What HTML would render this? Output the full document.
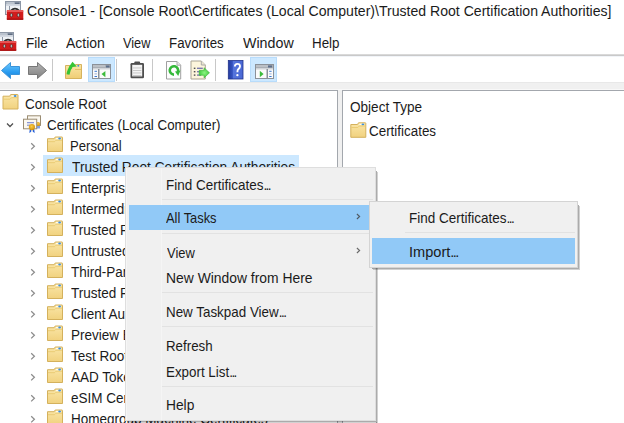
<!DOCTYPE html>
<html><head><meta charset="utf-8">
<style>
*{margin:0;padding:0;box-sizing:border-box}
html,body{width:624px;height:423px;overflow:hidden;background:#fff}
body{position:relative;font-family:"Liberation Sans",sans-serif;color:#1b1b1b}
.a{position:absolute}
.t{position:absolute;white-space:pre;line-height:1;transform-origin:0 0}
svg{position:absolute;overflow:visible}
.e{letter-spacing:-1.6px}
</style></head><body>
<svg style="left:0;top:0" width="30" height="24" viewBox="0 0 30 24">
  <rect x="5.5" y="1.5" width="15" height="13" fill="#eef1f5" stroke="#8d97a6"/>
  <rect x="6" y="2" width="14" height="2.5" fill="#a3adbb"/>
  <rect x="6.5" y="2.6" width="7.5" height="0.8" fill="#dfe4ea"/>
  <rect x="15" y="2.5" width="4.5" height="1.5" fill="#5d6b80"/>
  <rect x="6" y="4.5" width="14" height="1.5" fill="#d3d9e2"/>
  <rect x="9" y="6" width="1" height="8" fill="#8d97a6"/>
  <path d="M10.8 10.6 Q15 6.6 19.2 10.6" fill="none" stroke="#2e2e2e" stroke-width="1.5"/>
  <rect x="6.8" y="10" width="16.5" height="9.8" rx="1" fill="#d21c1c"/>
  <rect x="6.8" y="10" width="16.5" height="2" rx="0.8" fill="#e65454"/>
  <rect x="6.8" y="18.5" width="16.5" height="1.3" fill="#a50e0e"/>
  <ellipse cx="11.4" cy="15.1" rx="1.3" ry="1.8" fill="#a8c2c0" stroke="#6a1414" stroke-width="0.7"/>
  <ellipse cx="18.4" cy="15.1" rx="1.3" ry="1.8" fill="#a8c2c0" stroke="#6a1414" stroke-width="0.7"/>
</svg>
<div class="t" style="left:27.34px;top:4.0px;font-size:14.7px;transform:scaleX(0.9581);color:#1b1b1b;">Console1 - [Console Root\Certificates (Local Computer)\Trusted Root Certification Authorities]</div>
<svg style="left:-7px;top:31px" width="30" height="24" viewBox="0 0 30 24">
  <rect x="5.5" y="1.5" width="15" height="13" fill="#eef1f5" stroke="#8d97a6"/>
  <rect x="6" y="2" width="14" height="2.5" fill="#a3adbb"/>
  <rect x="6.5" y="2.6" width="7.5" height="0.8" fill="#dfe4ea"/>
  <rect x="15" y="2.5" width="4.5" height="1.5" fill="#5d6b80"/>
  <rect x="6" y="4.5" width="14" height="1.5" fill="#d3d9e2"/>
  <rect x="9" y="6" width="1" height="8" fill="#8d97a6"/>
  <path d="M10.8 10.6 Q15 6.6 19.2 10.6" fill="none" stroke="#2e2e2e" stroke-width="1.5"/>
  <rect x="6.8" y="10" width="16.5" height="9.8" rx="1" fill="#d21c1c"/>
  <rect x="6.8" y="10" width="16.5" height="2" rx="0.8" fill="#e65454"/>
  <rect x="6.8" y="18.5" width="16.5" height="1.3" fill="#a50e0e"/>
  <ellipse cx="11.4" cy="15.1" rx="1.3" ry="1.8" fill="#a8c2c0" stroke="#6a1414" stroke-width="0.7"/>
  <ellipse cx="18.4" cy="15.1" rx="1.3" ry="1.8" fill="#a8c2c0" stroke="#6a1414" stroke-width="0.7"/>
</svg>
<div class="t" style="left:25.78px;top:36.0px;font-size:14.7px;transform:scaleX(0.9227);color:#1b1b1b;">File</div>
<div class="t" style="left:65.6px;top:36.0px;font-size:14.7px;transform:scaleX(0.9525);color:#1b1b1b;">Action</div>
<div class="t" style="left:123.2px;top:36.0px;font-size:14.7px;transform:scaleX(0.8687);color:#1b1b1b;">View</div>
<div class="t" style="left:169.49px;top:36.0px;font-size:14.7px;transform:scaleX(0.9068);color:#1b1b1b;">Favorites</div>
<div class="t" style="left:243.3px;top:36.0px;font-size:14.7px;transform:scaleX(0.9702);color:#1b1b1b;">Window</div>
<div class="t" style="left:312.09px;top:36.0px;font-size:14.7px;transform:scaleX(0.9103);color:#1b1b1b;">Help</div>
<div class="a" style="left:0;top:54px;width:624px;height:1px;background:#d9d9d9"></div><div class="a" style="left:0;top:55px;width:624px;height:1px;background:#c9c9c9"></div><div class="a" style="left:0;top:56px;width:624px;height:1px;background:#f1f4f8"></div>

<div class="a" style="left:88px;top:57px;width:27px;height:25px;background:#cce8ff;border:1px solid #b8dcfb"></div>
<div class="a" style="left:250px;top:57px;width:27px;height:25px;background:#cce8ff;border:1px solid #b8dcfb"></div>
<div class="a" style="left:52px;top:59px;width:1px;height:22px;background:#c8c8c8"></div>
<div class="a" style="left:116px;top:59px;width:1px;height:22px;background:#c8c8c8"></div>
<div class="a" style="left:152px;top:59px;width:1px;height:22px;background:#c8c8c8"></div>
<div class="a" style="left:215px;top:59px;width:1px;height:22px;background:#c8c8c8"></div>
<svg style="left:0;top:56px" width="300" height="26" viewBox="0 56 300 26">
  <defs>
    <linearGradient id="gb" x1="0" y1="0" x2="0" y2="1"><stop offset="0" stop-color="#6fcaff"/><stop offset="0.6" stop-color="#2a9cf0"/><stop offset="1" stop-color="#1a7fd6"/></linearGradient>
    <linearGradient id="gg" x1="0" y1="0" x2="0" y2="1"><stop offset="0" stop-color="#b4b4b4"/><stop offset="1" stop-color="#808080"/></linearGradient>
    <linearGradient id="gh" x1="0" y1="0" x2="1" y2="0"><stop offset="0" stop-color="#243c9e"/><stop offset="0.28" stop-color="#3452c0"/><stop offset="0.32" stop-color="#5675dc"/><stop offset="1" stop-color="#4a68d4"/></linearGradient>
    <linearGradient id="gfu" x1="0" y1="0" x2="0" y2="1"><stop offset="0" stop-color="#fbe6a6"/><stop offset="1" stop-color="#efcd74"/></linearGradient>
    <radialGradient id="gar" cx="0.5" cy="0.5" r="0.6"><stop offset="0" stop-color="#8af57f"/><stop offset="1" stop-color="#38c236"/></radialGradient>
  </defs>
  <!-- back / forward -->
  <path d="M1.5 70.5 L10.5 62.5 L10.5 66.5 L19.5 66.5 L19.5 74.5 L10.5 74.5 L10.5 78.5 Z" fill="url(#gb)" stroke="#3a94da" stroke-width="1" stroke-linejoin="round"/>
  <path d="M46.5 70.5 L37.5 62.5 L37.5 66.5 L28.5 66.5 L28.5 74.5 L37.5 74.5 L37.5 78.5 Z" fill="url(#gg)" stroke="#777" stroke-width="1" stroke-linejoin="round"/>
  <!-- folder up -->
  <path d="M65.5 65.5 L74.5 65.5 L75.5 64.5 L81.5 64.5 L81.5 78.5 L65.5 78.5 Z" fill="url(#gfu)" stroke="#d6b35e"/>
  <path d="M75 69.5 L81 69.5" stroke="#e3bf62"/>
  <circle cx="78.3" cy="65.8" r="1" fill="#4d8fd0"/>
  <path d="M68 74.5 Q68.8 69 71.5 66.5" fill="none" stroke="#35c435" stroke-width="3"/>
  <path d="M68.5 67.5 L72.5 61.8 L76.8 66.5 Z" fill="#35c435"/>
  <!-- show/hide tree -->
  <rect x="92.5" y="64.5" width="18" height="14" fill="#fbfbfb" stroke="#8b9199"/>
  <rect x="93" y="65" width="17" height="3.5" fill="#a9aeb5"/>
  <rect x="93" y="65.6" width="12" height="0.8" fill="#d8dbe0"/>
  <rect x="106" y="65.5" width="3.5" height="2" fill="#5c6f8c"/>
  <rect x="93" y="68.5" width="17" height="1" fill="#d0d3d8"/>
  <rect x="98" y="69" width="1.5" height="9.5" fill="#8b9199"/>
  <rect x="94.5" y="70.8" width="2.5" height="1" fill="#3a78d0"/>
  <rect x="94.5" y="73.4" width="2.5" height="1" fill="#9ab2d8"/>
  <rect x="94.5" y="76" width="2.5" height="1" fill="#3a78d0"/>
  <path d="M105.4 70.9 L101.5 74 L105.4 77.2 Z" fill="#3cbc3c"/>
  <!-- clipboard -->
  <rect x="130.5" y="63" width="13.5" height="15.2" rx="1.2" fill="#4e4e4e"/>
  <rect x="132.2" y="64.8" width="10" height="11.6" fill="#f4f4f4"/>
  <rect x="134.3" y="61.6" width="5.8" height="2.6" rx="1" fill="#4e4e4e"/>
  <rect x="133" y="67.5" width="8.4" height="0.9" fill="#c4c4c4"/>
  <rect x="133" y="70" width="8.4" height="0.9" fill="#c4c4c4"/>
  <rect x="133" y="72.5" width="8.4" height="0.9" fill="#c4c4c4"/>
  <rect x="133" y="75" width="8.4" height="0.9" fill="#c4c4c4"/>
  <!-- refresh doc -->
  <path d="M166.5 61.5 L177 61.5 L180.7 65.2 L180.7 79 L166.5 79 Z" fill="#fdfdfd" stroke="#a0a0a0"/>
  <path d="M177 61.5 L177 65.2 L180.7 65.2" fill="#e8e8e8" stroke="#a8a8a8"/>
  <path d="M174 74.6 A4.2 4.2 0 1 1 177.9 71.8" fill="none" stroke="#35b83a" stroke-width="2.6"/>
  <path d="M175 71.6 L180.4 70.6 L178.2 76 Z" fill="#35b83a"/>
  <!-- export list -->
  <path d="M191 61 L201.3 61 L205.3 65 L205.3 79 L191 79 Z" fill="#fdf5dc" stroke="#a9a394"/>
  <path d="M201.3 61 L201.3 65 L205.3 65" fill="#ece6d2" stroke="#aaa"/>
  <rect x="193.8" y="67.6" width="1.6" height="1.4" fill="#505050"/>
  <rect x="193.8" y="71" width="1.6" height="1.4" fill="#505050"/>
  <rect x="193.8" y="74.4" width="1.6" height="1.4" fill="#505050"/>
  <rect x="197" y="67.6" width="5.8" height="1.4" fill="#7c7cae"/>
  <rect x="197" y="71" width="4" height="1.4" fill="#7c7cae"/>
  <rect x="197" y="74.4" width="4" height="1.4" fill="#7c7cae"/>
  <path d="M199.2 70.3 L204 70.3 L204 67.7 L209.5 72.8 L204 77.9 L204 75.3 L199.2 75.3 Z" fill="url(#gar)" stroke="#3fb63c" stroke-width="0.6" stroke-linejoin="round"/>
  <!-- help -->
  <rect x="228.3" y="60.5" width="14.7" height="18.5" fill="url(#gh)" stroke="#22348c" stroke-width="0.8"/>
  <path d="M234.9 66.6 Q234.9 63.9 237.4 63.9 Q240 63.9 240 66.3 Q240 68 238.4 69.1 Q237.4 69.9 237.4 72.3" fill="none" stroke="#fff" stroke-width="1.9"/>
  <circle cx="237.4" cy="75.2" r="1.15" fill="#fff"/>
  <!-- action pane -->
  <rect x="255.5" y="64.5" width="18" height="14" fill="#fbfbfb" stroke="#8b9199"/>
  <rect x="256" y="65" width="17" height="3.5" fill="#a9aeb5"/>
  <rect x="256" y="65.6" width="12" height="0.8" fill="#d8dbe0"/>
  <rect x="268" y="65.5" width="4" height="2" fill="#5c6f8c"/>
  <rect x="256" y="68.5" width="17" height="1" fill="#d0d3d8"/>
  <rect x="266.5" y="69" width="1.5" height="9.5" fill="#8b9199"/>
  <path d="M259.8 70.8 L263.6 74 L259.8 77.2 Z" fill="#3cbc3c"/>
  <rect x="269.2" y="70.8" width="2.4" height="1" fill="#3a78d0"/>
  <rect x="269.2" y="73.4" width="2.4" height="1" fill="#9ab2d8"/>
  <rect x="269.2" y="76" width="2.4" height="1" fill="#3a78d0"/>
</svg>

<div class="a" style="left:0;top:82px;width:624px;height:341px;background:#f0f0f0"></div><div class="a" style="left:0;top:82px;width:624px;height:1px;background:#e8e8e8"></div><div class="a" style="left:0;top:89px;width:624px;height:1px;background:#f8f8f8"></div>
<div class="a" style="left:-1px;top:90px;width:339px;height:340px;background:#fff;border:1px solid #a3a7ad"></div>
<div class="a" style="left:342px;top:90px;width:290px;height:340px;background:#fff;border:1px solid #a3a7ad"></div>
<div class="a" style="left:43px;top:155px;width:256px;height:21px;background:#cce8ff"></div>
<svg style="left:0;top:0" width="624" height="423" viewBox="0 0 624 423"><defs>
    <linearGradient id="gfo" x1="0" y1="0" x2="0" y2="1"><stop offset="0" stop-color="#fae6a8"/><stop offset="1" stop-color="#f1d27f"/></linearGradient>
    <g id="fold">
      <path d="M0.5 2.2 L7.2 2.2 L8.2 0.5 L15 0.5 Q15.5 0.5 15.5 1 L15.5 15 L0.5 15 Z" fill="url(#gfo)" stroke="#d4b15c"/>
      <path d="M1 5.2 L7.5 5.2 L9 3.7 L15 3.7" fill="none" stroke="#e8c86f" stroke-width="0.9"/>
      <rect x="9" y="1.4" width="5" height="1.3" fill="#fdfbf2"/>
      <ellipse cx="12.6" cy="2" rx="1.4" ry="0.9" fill="#3d8fdc"/>
    </g>
</defs>
<use href="#fold" x="2.5" y="94"/>

  <radialGradient id="gseal" cx="0.45" cy="0.4" r="0.6"><stop offset="0" stop-color="#f8cf4a"/><stop offset="1" stop-color="#d28c06"/></radialGradient>
  <rect x="27.5" y="115.8" width="13" height="9.6" fill="#fbf7ee" stroke="#9a8c72"/>
  <circle cx="38" cy="124" r="2" fill="url(#gseal)"/>
  <path d="M37 126 L37 128.5 M39 126 L39 128.5" stroke="#2c62d6" stroke-width="1.2"/>
  <rect x="23.5" y="119.2" width="13.2" height="9.6" fill="#fbf8f0" stroke="#9a8c72"/>
  <rect x="27" y="122" width="7" height="1.3" fill="#8a96d4"/>
  <rect x="27" y="124.6" width="3" height="1.2" fill="#8a96d4"/>
  <path d="M29.8 129 L29.3 133 L31.2 131.8 L31.4 129 Z M32.6 129 L32.8 131.8 L34.7 133 L34.2 129 Z" fill="#2a62d8"/>
  <circle cx="31.9" cy="127.1" r="3.1" fill="url(#gseal)"/>
  <path d="M7 123.5 L10 126.5 L13 123.5" fill="none" stroke="#505050" stroke-width="1.3"/>

<g fill="none" stroke="#8c8c8c" stroke-width="1.25">
<path d="M31.2 143.2 L34.4 146.3 L31.2 149.4"/>
<path d="M31.2 164.2 L34.4 167.3 L31.2 170.4"/>
<path d="M31.2 185.2 L34.4 188.3 L31.2 191.4"/>
<path d="M31.2 206.2 L34.4 209.3 L31.2 212.4"/>
<path d="M31.2 227.2 L34.4 230.3 L31.2 233.4"/>
<path d="M31.2 248.2 L34.4 251.3 L31.2 254.4"/>
<path d="M31.2 269.2 L34.4 272.3 L31.2 275.4"/>
<path d="M31.2 290.2 L34.4 293.3 L31.2 296.4"/>
<path d="M31.2 311.2 L34.4 314.3 L31.2 317.4"/>
<path d="M31.2 332.2 L34.4 335.3 L31.2 338.4"/>
<path d="M31.2 353.2 L34.4 356.3 L31.2 359.4"/>
<path d="M31.2 374.2 L34.4 377.3 L31.2 380.4"/>
<path d="M31.2 395.2 L34.4 398.3 L31.2 401.4"/>
<path d="M31.2 416.2 L34.4 419.3 L31.2 422.4"/>
</g>
<use href="#fold" x="47" y="136.5"/>
<use href="#fold" x="47" y="157.5"/>
<use href="#fold" x="47" y="178.5"/>
<use href="#fold" x="47" y="199.5"/>
<use href="#fold" x="47" y="220.5"/>
<use href="#fold" x="47" y="241.5"/>
<use href="#fold" x="47" y="262.5"/>
<use href="#fold" x="47" y="283.5"/>
<use href="#fold" x="47" y="304.5"/>
<use href="#fold" x="47" y="325.5"/>
<use href="#fold" x="47" y="346.5"/>
<use href="#fold" x="47" y="367.5"/>
<use href="#fold" x="47" y="388.5"/>
<use href="#fold" x="47" y="409.5"/>
<use href="#fold" x="350.3" y="122.3"/>
</svg>
<div class="t" style="left:25.08px;top:96.8px;font-size:14.7px;transform:scaleX(0.917);color:#1b1b1b;">Console Root</div>
<div class="t" style="left:47.09px;top:117.8px;font-size:14.7px;transform:scaleX(0.9085);color:#1b1b1b;">Certificates (Local Computer)</div>
<div class="t" style="left:69.91px;top:138.8px;font-size:14.7px;transform:scaleX(0.8929);color:#1b1b1b;">Personal</div>
<div class="t" style="left:71.5px;top:159.8px;font-size:14.7px;transform:scaleX(0.9349);color:#1b1b1b;">Trusted Root Certification Authorities</div>
<div class="t" style="left:70.6px;top:180.8px;font-size:14.7px;transform:scaleX(0.92);color:#1b1b1b">Enterprise Trust</div>
<div class="t" style="left:70.6px;top:201.8px;font-size:14.7px;transform:scaleX(0.92);color:#1b1b1b">Intermediate Certification Authorities</div>
<div class="t" style="left:70.6px;top:222.8px;font-size:14.7px;transform:scaleX(0.92);color:#1b1b1b">Trusted Publishers</div>
<div class="t" style="left:70.6px;top:243.8px;font-size:14.7px;transform:scaleX(0.92);color:#1b1b1b">Untrusted Certificates</div>
<div class="t" style="left:70.6px;top:264.8px;font-size:14.7px;transform:scaleX(0.92);color:#1b1b1b">Third-Party Root Certification Authorities</div>
<div class="t" style="left:70.6px;top:285.8px;font-size:14.7px;transform:scaleX(0.92);color:#1b1b1b">Trusted People</div>
<div class="t" style="left:70.6px;top:306.8px;font-size:14.7px;transform:scaleX(0.92);color:#1b1b1b">Client Authentication Issuers</div>
<div class="t" style="left:70.6px;top:327.8px;font-size:14.7px;transform:scaleX(0.92);color:#1b1b1b">Preview Build Roots</div>
<div class="t" style="left:70.6px;top:348.8px;font-size:14.7px;transform:scaleX(0.92);color:#1b1b1b">Test Roots</div>
<div class="t" style="left:70.6px;top:369.8px;font-size:14.7px;transform:scaleX(0.92);color:#1b1b1b">AAD Token Issuer</div>
<div class="t" style="left:70.6px;top:390.8px;font-size:14.7px;transform:scaleX(0.92);color:#1b1b1b">eSIM Certification Authorities</div>
<div class="t" style="left:70.6px;top:411.8px;font-size:14.7px;transform:scaleX(0.92);color:#1b1b1b">Homegroup Machine Certificates</div>
<div class="t" style="left:350.18px;top:100.3px;font-size:14.7px;transform:scaleX(0.9234);color:#1b1b1b;">Object Type</div>
<div class="t" style="left:368.89px;top:123.9px;font-size:14.7px;transform:scaleX(0.9125);color:#1b1b1b;">Certificates</div>

<div class="a" style="left:376px;top:171px;width:1px;height:252px;background:rgba(0,0,0,.33)"></div>
<div class="a" style="left:377px;top:172px;width:1px;height:251px;background:rgba(0,0,0,.18)"></div>
<div class="a" style="left:128px;top:421px;width:248px;height:1px;background:rgba(0,0,0,.33)"></div>
<div class="a" style="left:129px;top:422px;width:248px;height:1px;background:rgba(0,0,0,.18)"></div>
<div class="a" style="left:125px;top:167px;width:251px;height:254px;background:#f0f0f0;border:1px solid #dedede"></div>
<div class="a" style="left:126px;top:168px;width:1px;height:252px;background:#f6f6f6"></div>
<div class="a" style="left:161px;top:168px;width:1px;height:252px;background:#f5f5f5"></div>
<div class="a" style="left:129px;top:205px;width:240px;height:25px;background:#91c9f7"></div>
<div class="a" style="left:162px;top:199px;width:211px;height:1px;background:#e2e2e2"></div>
<div class="a" style="left:162px;top:233px;width:211px;height:1px;background:#e2e2e2"></div>
<div class="a" style="left:162px;top:292px;width:211px;height:1px;background:#e2e2e2"></div>
<div class="a" style="left:162px;top:326px;width:211px;height:1px;background:#e2e2e2"></div>
<div class="a" style="left:162px;top:386px;width:211px;height:1px;background:#e2e2e2"></div>
<div class="t" style="left:166.16px;top:177.7px;font-size:14.3px;transform:scaleX(0.9427);color:#1b1b1b;">Find Certificates<span class=e>...</span></div>
<div class="t" style="left:166.3px;top:211.4px;font-size:14.3px;transform:scaleX(0.9);color:#1b1b1b;">All Tasks</div>
<div class="t" style="left:167.0px;top:245.5px;font-size:14.3px;transform:scaleX(0.9032);color:#1b1b1b;">View</div>
<div class="t" style="left:166.03px;top:270.7px;font-size:14.3px;transform:scaleX(0.9711);color:#1b1b1b;">New Window from Here</div>
<div class="t" style="left:165.56px;top:305.1px;font-size:14.3px;transform:scaleX(0.937);color:#1b1b1b;">New Taskpad View<span class=e>...</span></div>
<div class="t" style="left:166.07px;top:338.8px;font-size:14.3px;transform:scaleX(0.9312);color:#1b1b1b;">Refresh</div>
<div class="t" style="left:166.06px;top:364.7px;font-size:14.3px;transform:scaleX(0.9351);color:#1b1b1b;">Export List<span class=e>...</span></div>
<div class="t" style="left:166.04px;top:398.3px;font-size:14.3px;transform:scaleX(0.9643);color:#1b1b1b;">Help</div>
<svg style="left:0;top:0" width="624" height="423" viewBox="0 0 624 423">
  <path d="M356.9 214 L359.6 216.5 L356.9 219" fill="none" stroke="#505a64" stroke-width="1.15"/>
  <path d="M356.9 248 L359.6 250.5 L356.9 253" fill="none" stroke="#6a6a6a" stroke-width="1.15"/>
</svg>
<div class="a" style="left:578px;top:205px;width:1px;height:64px;background:rgba(0,0,0,.33)"></div>
<div class="a" style="left:579px;top:206px;width:1px;height:64px;background:rgba(0,0,0,.18)"></div>
<div class="a" style="left:372px;top:268px;width:206px;height:1px;background:rgba(0,0,0,.33)"></div>
<div class="a" style="left:373px;top:269px;width:206px;height:1px;background:rgba(0,0,0,.18)"></div>
<div class="a" style="left:369px;top:201px;width:209px;height:67px;background:#f0f0f0;border:1px solid #d4d4d4"></div>
<div class="a" style="left:372px;top:238px;width:203px;height:26px;background:#91c9f7"></div>
<div class="a" style="left:405px;top:232px;width:170px;height:1px;background:#e2e2e2"></div>
<div class="t" style="left:409.46px;top:211.3px;font-size:14.3px;transform:scaleX(0.9436);color:#1b1b1b;">Find Certificates<span class=e>...</span></div>
<div class="t" style="left:408.98px;top:245.0px;font-size:14.3px;transform:scaleX(1.0191);color:#1b1b1b;">Import<span class=e>...</span></div>
</body></html>
